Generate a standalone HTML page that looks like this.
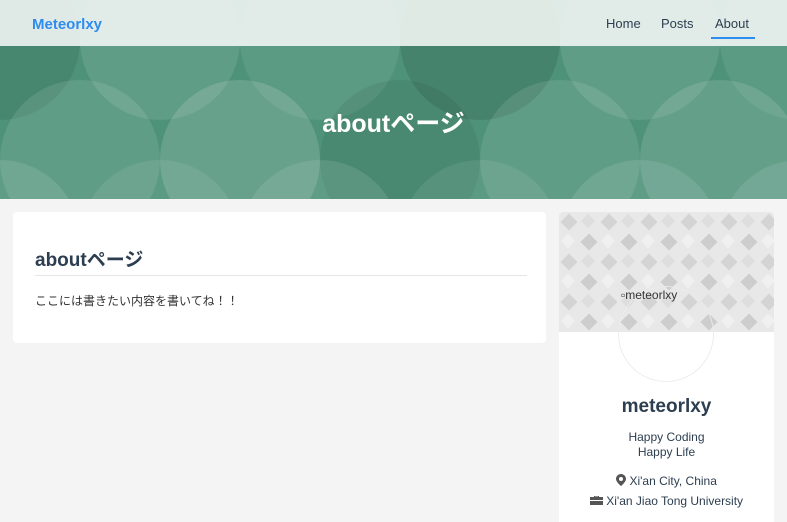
<!DOCTYPE html>
<html><head><meta charset="utf-8">
<style>
*{margin:0;padding:0;box-sizing:border-box}
body{width:787px;height:508px;overflow:hidden;background:#f4f4f4;font-family:"Liberation Sans","Noto Sans CJK JP",sans-serif;position:relative}
.hero{position:absolute;left:0;top:0;width:787px;height:199px;background:#4e9279;overflow:hidden}
.hdr{position:absolute;left:0;top:0;width:787px;height:46px;background:rgba(240,245,243,0.9);}
.brand{position:absolute;left:32px;top:16px;color:#2d8cf0;font-size:15px;font-weight:bold}
.nav{position:absolute;top:16px;font-size:13px;color:#2c3e50}
.ul{position:absolute;left:711px;top:37px;width:44px;height:2px;background:#2d8cf0}
.title{position:absolute;left:0;width:787px;top:104px;text-align:center;color:#fff;font-size:25px;font-weight:bold}
.card{position:absolute;background:#fff;border-radius:4px}
</style></head><body>
<div class="hero">
<svg width="787" height="199" style="position:absolute;left:0;top:0">
<g fill="#fff">
<circle cx="0" cy="40" r="80" fill="#000" fill-opacity=".08"/><circle cx="160" cy="40" r="80" fill-opacity=".1"/>
<circle cx="320" cy="40" r="80" fill-opacity=".08"/><circle cx="480" cy="40" r="80" fill="#000" fill-opacity=".1"/>
<circle cx="640" cy="40" r="80" fill-opacity=".1"/><circle cx="800" cy="40" r="80" fill-opacity=".08"/>
<circle cx="80" cy="160" r="80" fill-opacity=".1"/><circle cx="240" cy="160" r="80" fill-opacity=".14"/>
<circle cx="400" cy="160" r="80" fill="#000" fill-opacity=".06"/><circle cx="560" cy="160" r="80" fill-opacity=".1"/>
<circle cx="720" cy="160" r="80" fill-opacity=".12"/>
<circle cx="0" cy="240" r="80" fill-opacity=".1"/><circle cx="160" cy="240" r="80" fill-opacity=".08"/>
<circle cx="320" cy="240" r="80" fill-opacity=".1"/><circle cx="480" cy="240" r="80" fill-opacity=".08"/>
<circle cx="640" cy="240" r="80" fill-opacity=".1"/><circle cx="800" cy="240" r="80" fill-opacity=".1"/>
</g></svg>
<div class="hdr"></div>
<div class="brand">Meteorlxy</div>
<div class="nav" style="left:606px">Home</div>
<div class="nav" style="left:661px">Posts</div>
<div class="nav" style="left:715px">About</div>
<div class="ul"></div>
<div class="title">aboutページ</div>
</div>

<div class="card" style="left:13px;top:212px;width:533px;height:131px">
<div style="position:absolute;left:22px;top:33px;font-size:19px;font-weight:bold;color:#2c3e50">aboutページ</div>
<div style="position:absolute;left:22px;top:63px;width:492px;height:1px;background:#e5e5e5"></div>
<div style="position:absolute;left:22px;top:80px;font-size:12px;color:#333">ここには書きたい内容を書いてね！！</div>
</div>

<div class="card" style="left:559px;top:212px;width:215px;height:310px;border-radius:4px 4px 0 0;overflow:hidden">
<svg width="215" height="120" style="position:absolute;left:0;top:0;background:#e8e8e8">
<defs><pattern id="p" width="40" height="40" patternUnits="userSpaceOnUse">
<rect x="4" y="4" width="12" height="12" fill="#d4d4d4" transform="rotate(45 10 10)"/>
<rect x="24" y="24" width="12" height="12" fill="#cdcdcd" transform="rotate(45 30 30)"/>
<rect x="24" y="4" width="10" height="10" fill="#dedede" transform="rotate(45 29 9)"/>
<rect x="4" y="24" width="10" height="10" fill="#f0f0f0" transform="rotate(45 9 29)"/>
</pattern></defs>
<rect width="215" height="120" fill="url(#p)"/></svg>
<div style="position:absolute;left:59px;top:74px;width:96px;height:96px;border-radius:50%;border:1px solid rgba(235,235,235,0.9)"></div>
<div style="position:absolute;left:62px;top:76px;font-size:12px;color:#333">▫meteorlxy</div>
<div style="position:absolute;left:0;width:215px;top:184px;text-align:center;font-size:19px;font-weight:bold;color:#2c3e50">meteorlxy</div>
<div style="position:absolute;left:0;width:215px;top:218px;text-align:center;font-size:12px;line-height:15px;color:#2c3e50">Happy Coding<br>Happy Life</div>
<div style="position:absolute;left:0;width:215px;top:262px;text-align:center;font-size:12px;color:#2c3e50">
<svg width="10" height="12" viewBox="0 0 10 12" style="vertical-align:-1px"><path d="M5 0C2.2 0 0 2.2 0 5c0 3 5 7 5 7s5-4 5-7c0-2.8-2.2-5-5-5zm0 7a2 2 0 110-4 2 2 0 010 4z" fill="#555"/></svg> Xi'an City, China</div>
<div style="position:absolute;left:0;width:215px;top:282px;text-align:center;font-size:12px;color:#2c3e50;white-space:nowrap">
<svg width="13" height="11" viewBox="0 0 13 11" style="vertical-align:-1px"><path d="M4 2V1h5v1h4v8H0V2zM5 2h3V1.6H5z" fill="#555"/><rect x="0" y="5" width="13" height="1" fill="#fff"/></svg> Xi'an Jiao Tong University</div>
</div>
</body></html>
